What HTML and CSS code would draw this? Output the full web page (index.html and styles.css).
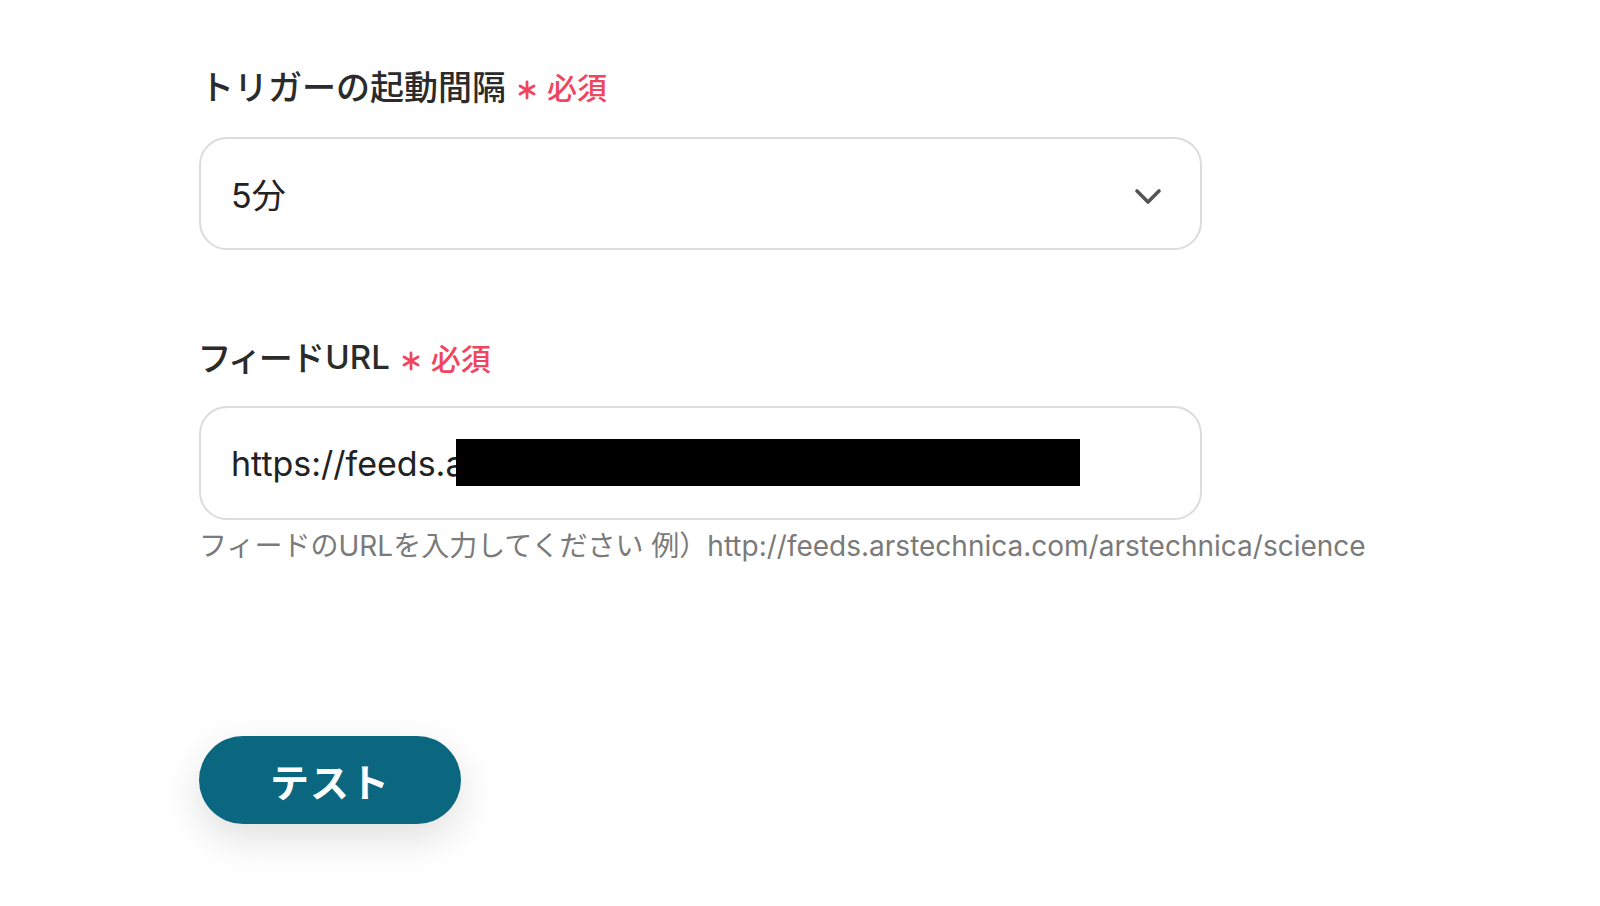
FILE: index.html
```html
<!DOCTYPE html>
<html lang="ja">
<head>
<meta charset="utf-8">
<link rel="stylesheet" href="styles.css">
</head>
<body>
<main class="form">
  <section class="field field-interval">
    <div class="label">トリガーの起動間隔<span class="req"><svg class="star" width="20" height="20" viewBox="0 0 20 20"><g stroke="#f0455f" stroke-width="2.8" stroke-linecap="round"><path d="M10 2 V18"/><path d="M3 6 L17 14"/><path d="M3 14 L17 6"/></g></svg>必須</span></div>
    <div class="select">
      <span class="value">5分</span>
      <svg class="chev" width="28" height="18" viewBox="0 0 28 18"><path d="M3 3 L14 14 L25 3" fill="none" stroke="#555" stroke-width="3.6" stroke-linecap="round" stroke-linejoin="round"/></svg>
    </div>
  </section>
  <section class="field field-url">
    <div class="label"><span class="kana">フィード</span><span class="latin">URL</span><span class="req"><svg class="star" width="20" height="20" viewBox="0 0 20 20"><g stroke="#f0455f" stroke-width="2.8" stroke-linecap="round"><path d="M10 2 V18"/><path d="M3 6 L17 14"/><path d="M3 14 L17 6"/></g></svg>必須</span></div>
    <div class="input">
      <span class="value">https://feeds.a</span>
      <span class="redact"></span>
    </div>
    <div class="help">フィードのURLを入力してください 例）http://feeds.arstechnica.com/arstechnica/science</div>
  </section>
  <button class="btn">テスト</button>
</main>
</body>
</html>
```
FILE: styles.css
```css
* { box-sizing: border-box; }
html, body { margin: 0; padding: 0; background: #fff; }
body {
  font-family: Inter, "Noto Sans CJK JP", sans-serif;
  color: #333;
  width: 1600px;
  height: 906px;
  overflow: hidden;
}
.form {
  display: flex;
  flex-direction: column;
  align-items: flex-start;
  padding: 61px 0 0 199px;
}
.field { display: flex; flex-direction: column; width: 1003px; }
.label {
  font-family: "Noto Sans CJK JP", sans-serif;
  font-size: 34px;
  font-weight: 500;
  line-height: 50px;
  height: 50px;
  color: #2b2b2b;
  display: flex;
  align-items: center;
  white-space: nowrap;
  padding-left: 1px;
}
.kana { font-feature-settings: "palt" 1; letter-spacing: 2.5px; }
.latin {
  font-family: Inter, sans-serif;
  font-weight: 500;
  font-size: 33px;
  margin-left: 1px;
}
.req {
  color: #f0455f;
  font-size: 30px;
  font-weight: 500;
  margin-left: 11px;
  display: inline-flex;
  align-items: center;
}
.star { margin-right: 10px; transform: translateY(4px); }
.select, .input {
  height: 113px;
  border: 2px solid #dcdcdc;
  border-radius: 28px;
  display: flex;
  align-items: center;
  padding: 0 38px 0 30px;
  font-size: 34px;
  color: #222;
}
.select { margin-top: 26px; justify-content: space-between; }
.input { margin-top: 24px; height: 114px; }
.value { white-space: nowrap; }
.chev { margin-top: 6px; }
.field-url { margin-top: 82px; }
.redact {
  display: block;
  width: 624px;
  height: 47px;
  background: #000;
  margin-left: -8px;
  margin-top: -2px;
}
.help {
  margin-top: 10px;
  font-size: 28px;
  line-height: 32px;
  color: #7a7a7a;
  white-space: nowrap;
}
.btn {
  margin-top: 174px;
  width: 262px;
  height: 88px;
  border: none;
  border-radius: 44px;
  background: #0b6780;
  color: #fff;
  font-family: "Noto Sans CJK JP", sans-serif;
  font-weight: 700;
  font-size: 39px;
  letter-spacing: 1px;
  box-shadow: 0 14px 40px rgba(0,0,0,0.13);
  cursor: pointer;
}
```
